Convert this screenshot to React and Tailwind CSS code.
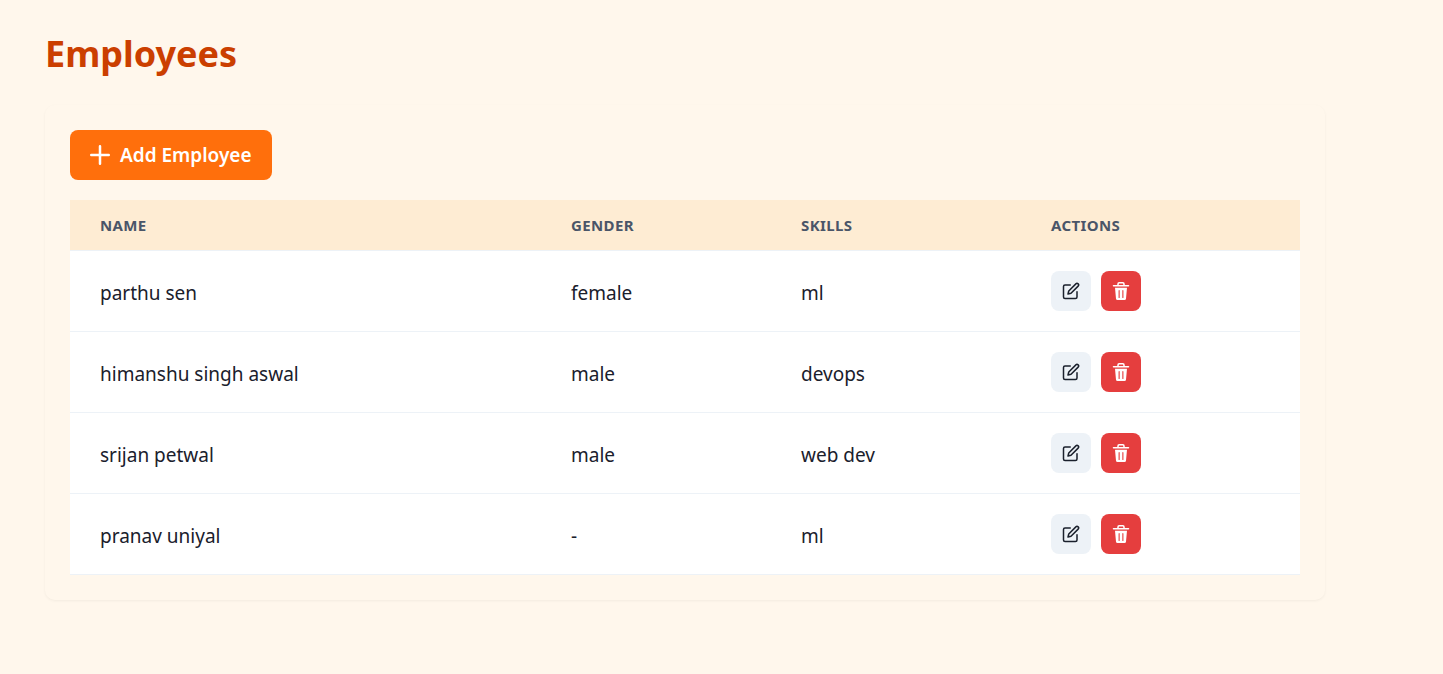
import { FiEdit } from "react-icons/fi";

const employees = [
  { name: "parthu sen", gender: "female", skills: "ml" },
  { name: "himanshu singh aswal", gender: "male", skills: "devops" },
  { name: "srijan petwal", gender: "male", skills: "web dev" },
  { name: "pranav uniyal", gender: "-", skills: "ml" },
];

function AddIcon() {
  return (
    <svg viewBox="0 0 24 24" className="size-5" fill="currentColor" aria-hidden="true">
      <path d="M0,12a1.5,1.5,0,0,0,1.5,1.5h8.75a.25.25,0,0,1,.25.25V22.5a1.5,1.5,0,0,0,3,0V13.75a.25.25,0,0,1,.25-.25H22.5a1.5,1.5,0,0,0,0-3H13.75a.25.25,0,0,1-.25-.25V1.5a1.5,1.5,0,0,0-3,0v8.75a.25.25,0,0,1-.25.25H1.5A1.5,1.5,0,0,0,0,12Z" />
    </svg>
  );
}

function DeleteIcon() {
  return (
    <svg viewBox="0 0 24 24" className="size-[18px]" fill="currentColor" aria-hidden="true">
      <path d="M19.452 7.5H4.547a.5.5 0 0 0-.5.545l1.287 14.136A2 2 0 0 0 7.326 24h9.347a2 2 0 0 0 1.992-1.819L19.95 8.045a.5.5 0 0 0-.129-.382.5.5 0 0 0-.369-.163zm-9.2 13a.75.75 0 0 1-1.5 0v-9a.75.75 0 0 1 1.5 0zm5 0a.75.75 0 0 1-1.5 0v-9a.75.75 0 0 1 1.5 0zM22 4h-4.75a.25.25 0 0 1-.25-.25V2.5A2.5 2.5 0 0 0 14.5 0h-5A2.5 2.5 0 0 0 7 2.5v1.25a.25.25 0 0 1-.25.25H2a1 1 0 0 0 0 2h20a1 1 0 0 0 0-2zM9 3.75V2.5a.5.5 0 0 1 .5-.5h5a.5.5 0 0 1 .5.5v1.25a.25.25 0 0 1-.25.25h-5.5A.25.25 0 0 1 9 3.75z" />
    </svg>
  );
}

function HeaderCell({ children }) {
  return (
    <th scope="col" className="border-b border-[#edf2f7] px-[30px] py-[15px] text-left text-[15px] leading-5 font-bold tracking-wide text-[#4a5568] uppercase">
      {children}
    </th>
  );
}

function TextCell({ children }) {
  return <td className="border-b border-[#edf2f7] px-[30px] pt-6 pb-5">{children}</td>;
}

export default function App() {
  return (
    <main className="min-h-screen bg-[#fff7ec] px-[45px] py-[30px] font-['Noto_Sans','Open_Sans',sans-serif] text-[19px] text-[#1a202c]">
      <h1 className="mb-[27px] text-[36px] leading-[48px] font-bold text-[#cb3f00]">Employees</h1>
      <section className="max-w-[1280px] rounded-[10px] p-[25px] shadow-[0_1px_3px_rgba(0,0,0,0.05)]">
        <button type="button" className="mb-5 flex h-[50px] items-center gap-[10px] rounded-lg bg-[#ff6f0c] px-5 font-semibold text-white">
          <AddIcon />
          Add Employee
        </button>
        <table className="w-full table-fixed border-separate border-spacing-0 bg-white">
          <colgroup>
            <col />
            <col className="w-[230px]" />
            <col className="w-[250px]" />
            <col className="w-[279px]" />
          </colgroup>
          <thead className="bg-[#feecd3]">
            <tr>
              <HeaderCell>Name</HeaderCell>
              <HeaderCell>Gender</HeaderCell>
              <HeaderCell>Skills</HeaderCell>
              <HeaderCell>Actions</HeaderCell>
            </tr>
          </thead>
          <tbody>
            {employees.map((e) => (
              <tr key={e.name}>
                <TextCell>{e.name}</TextCell>
                <TextCell>{e.gender}</TextCell>
                <TextCell>{e.skills}</TextCell>
                <td className="border-b border-[#edf2f7] px-[30px] py-5">
                  <div className="flex gap-[10px]">
                    <button type="button" aria-label={`Edit ${e.name}`} className="flex size-10 items-center justify-center rounded-lg bg-[#edf2f7]">
                      <FiEdit size={18} />
                    </button>
                    <button type="button" aria-label={`Delete ${e.name}`} className="flex size-10 items-center justify-center rounded-lg bg-[#e53e3e] text-white">
                      <DeleteIcon />
                    </button>
                  </div>
                </td>
              </tr>
            ))}
          </tbody>
        </table>
      </section>
    </main>
  );
}
